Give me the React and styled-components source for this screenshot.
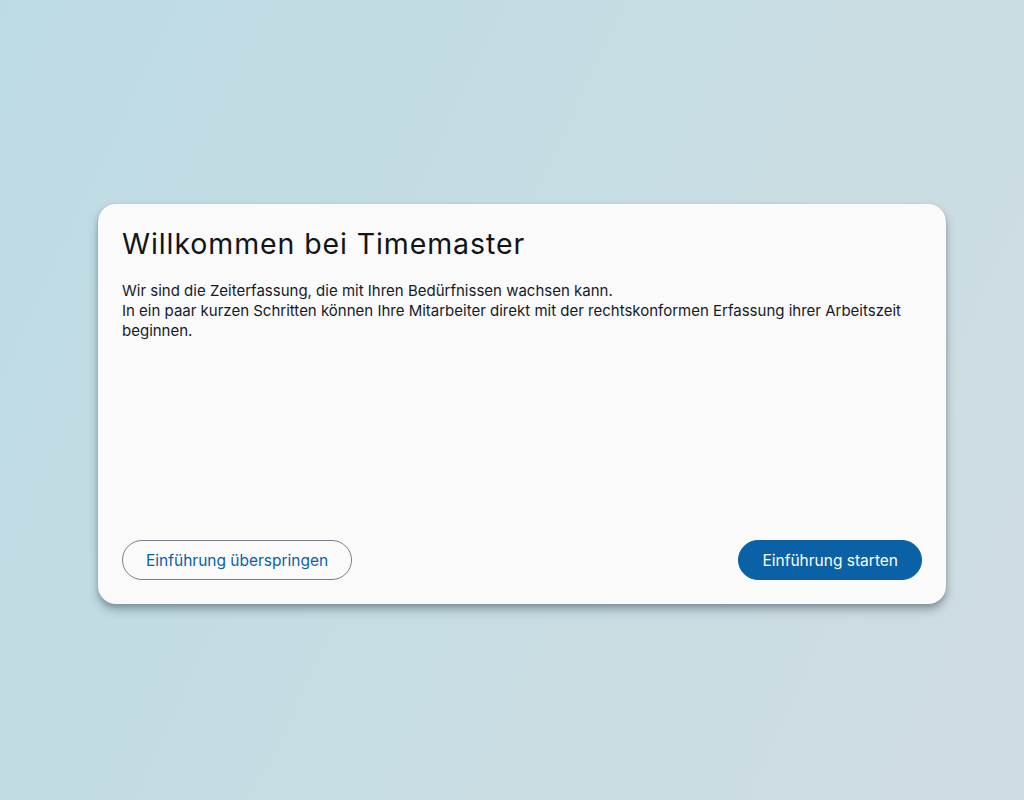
import React from "react";
import styled, { createGlobalStyle } from "styled-components";

const GlobalStyle = createGlobalStyle`
  html, body {
    margin: 0;
    padding: 0;
    height: 100%;
  }
  body {
    font-family: Inter, "Open Sans", "Liberation Sans", sans-serif;
  }
`;

const Page = styled.div`
  width: 100vw;
  height: 100vh;
  display: flex;
  align-items: center;
  justify-content: center;
  background: linear-gradient(115deg, #bddbe4 0%, #c6dde3 50%, #d0dce1 100%);
`;

const Card = styled.section`
  box-sizing: border-box;
  width: 848px;
  height: 400px;
  margin: 8px 0 0 20px;
  padding: 22px 24px 24px;
  display: flex;
  flex-direction: column;
  background: #fafafa;
  border-radius: 18px;
  box-shadow: 0 6px 10px rgba(40, 60, 70, 0.35), 0 2px 4px rgba(40, 60, 70, 0.2);
`;

const Title = styled.h1`
  margin: 0 0 19px;
  font-size: 28.5px;
  font-weight: 400;
  line-height: 36px;
  color: #111418;
  letter-spacing: 0.9px;
`;

const Text = styled.p`
  margin: 0;
  font-size: 15px;
  line-height: 20px;
  color: #141a2a;
`;

const Actions = styled.div`
  margin-top: auto;
  display: flex;
  justify-content: space-between;
  align-items: center;
`;

const Button = styled.button`
  box-sizing: border-box;
  height: 40px;
  padding: 0 23px;
  border-radius: 20px;
  font-family: inherit;
  font-size: 15.5px;
  cursor: pointer;
  border: 1px solid ${(p) => (p.$primary ? "#0a61a5" : "#7b7f87")};
  background: ${(p) => (p.$primary ? "#0a61a5" : "transparent")};
  color: ${(p) => (p.$primary ? "#ffffff" : "#0a61a5")};
`;

export default function App() {
  return (
    <>
      <GlobalStyle />
      <Page>
        <Card>
          <Title>Willkommen bei Timemaster</Title>
          <Text>
            Wir sind die Zeiterfassung, die mit Ihren Bedürfnissen wachsen kann.
            <br />
            In ein paar kurzen Schritten können Ihre Mitarbeiter direkt mit der
            rechtskonformen Erfassung ihrer Arbeitszeit beginnen.
          </Text>
          <Actions>
            <Button>Einführung überspringen</Button>
            <Button $primary>Einführung starten</Button>
          </Actions>
        </Card>
      </Page>
    </>
  );
}
